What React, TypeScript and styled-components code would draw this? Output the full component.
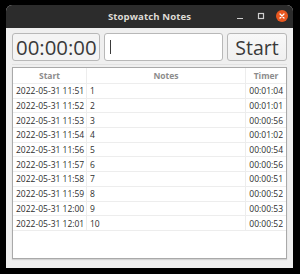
import React from "react";
import styled, { createGlobalStyle } from "styled-components";

const Global = createGlobalStyle`
  html, body { margin: 0; padding: 0; background: #000; }
  body { width: 300px; height: 274px; overflow: hidden; font-family: "Open Sans", "Noto Sans", sans-serif; }
`;

const Screen = styled.div`
  width: 300px;
  height: 274px;
  padding: 5px 7px 6px 6px;
  box-sizing: border-box;
  display: flex;
`;

const Window = styled.div`
  flex: 1;
  display: flex;
  flex-direction: column;
  border-radius: 6px 6px 0 0;
  overflow: hidden;
  background: #efefef;
`;

const TitleBar = styled.div`
  height: 23px;
  flex: none;
  background: #2c2c2c;
  display: flex;
  align-items: center;
  justify-content: center;
  position: relative;
  color: #dedbd5;
  font-weight: 700;
  font-size: 9.6px;
  letter-spacing: 0.1px;
`;

const Controls = styled.div`
  position: absolute;
  right: 5px;
  top: 5px;
  display: flex;
  align-items: center;
  gap: 9px;
`;

const CtlBox = styled.div`
  width: 12px;
  height: 12px;
  display: flex;
  align-items: center;
  justify-content: center;
`;

const CloseBtn = styled(CtlBox)`
  border-radius: 50%;
  background: #e8571f;
`;

const Content = styled.div`
  flex: 1;
  display: flex;
  flex-direction: column;
  padding: 5px 6px 9px 6px;
`;

const TopRow = styled.div`
  display: flex;
  gap: 4px;
  height: 28px;
`;

const Box = styled.div`
  box-sizing: border-box;
  border: 1px solid #b8b8b8;
  border-radius: 3px;
  display: flex;
  align-items: center;
`;

const TimerBox = styled(Box)`
  width: 88px;
  background: #f4f4f4;
  padding-left: 3px;
  font-size: 20.4px;
  color: #3a3a3a;
  letter-spacing: 0px;
`;

const InputBox = styled(Box)`
  flex: 1;
  background: #fff;
  padding-left: 5px;
`;

const Caret = styled.div`
  width: 1px;
  height: 14px;
  background: #3a3a3a;
`;

const StartButton = styled(Box)`
  width: 60px;
  justify-content: center;
  background: linear-gradient(#f8f8f8, #f0f0f0);
  font-size: 19.5px;
  color: #3a3a3a;
`;

const Divider = styled.div`
  height: 1px;
  background: #e2e2e2;
  margin: 3px 0 2px 0;
`;

const Table = styled.div`
  flex: 1;
  background: #fff;
  border: 1px solid #a9a9a9;
  box-shadow: 0 1px 1px rgba(0,0,0,0.12);
  display: flex;
  flex-direction: column;
  font-size: 8.5px;
  color: #2e2e2e;
`;

const Row = styled.div<{ $header?: boolean }>`
  display: grid;
  grid-template-columns: 74px 1fr 40px;
  height: ${(p) => (p.$header ? "16px" : "14.7px")};
  border-bottom: 1px solid #ededed;
  box-sizing: border-box;
  align-items: center;
  ${(p) => (p.$header ? "color: #8c8c8c; font-weight: 700;" : "")}
`;

const Cell = styled.div<{ $align?: "left" | "center" | "right"; $last?: boolean }>`
  height: 100%;
  display: flex;
  align-items: center;
  padding: 0 3px;
  white-space: nowrap;
  justify-content: ${(p) =>
    p.$align === "center" ? "center" : p.$align === "right" ? "flex-end" : "flex-start"};
  border-right: ${(p) => (p.$last ? "none" : "1px solid #ededed")};
`;

const rows = [
  ["2022-05-31 11:51", "1", "00:01:04"],
  ["2022-05-31 11:52", "2", "00:01:01"],
  ["2022-05-31 11:53", "3", "00:00:56"],
  ["2022-05-31 11:54", "4", "00:01:02"],
  ["2022-05-31 11:56", "5", "00:00:54"],
  ["2022-05-31 11:57", "6", "00:00:56"],
  ["2022-05-31 11:58", "7", "00:00:51"],
  ["2022-05-31 11:59", "8", "00:00:52"],
  ["2022-05-31 12:00", "9", "00:00:53"],
  ["2022-05-31 12:01", "10", "00:00:52"],
];

export default function App() {
  return (
    <>
      <Global />
      <Screen>
        <Window>
          <TitleBar>
            Stopwatch Notes
            <Controls>
              <CtlBox>
                <svg width="12" height="12" viewBox="0 0 12 12">
                  <line x1="3" y1="8.5" x2="9" y2="8.5" stroke="#cfcfcf" strokeWidth="1.2" />
                </svg>
              </CtlBox>
              <CtlBox>
                <svg width="12" height="12" viewBox="0 0 12 12">
                  <rect x="3.5" y="3.5" width="5" height="5" fill="none" stroke="#cfcfcf" strokeWidth="1.2" />
                </svg>
              </CtlBox>
              <CloseBtn>
                <svg width="12" height="12" viewBox="0 0 12 12">
                  <path d="M4 4 L8 8 M8 4 L4 8" stroke="#fff" strokeWidth="1.2" strokeLinecap="round" />
                </svg>
              </CloseBtn>
            </Controls>
          </TitleBar>
          <Content>
            <TopRow>
              <TimerBox>00:00:00</TimerBox>
              <InputBox>
                <Caret />
              </InputBox>
              <StartButton>Start</StartButton>
            </TopRow>
            <Divider />
            <Table>
              <Row $header>
                <Cell $align="center">Start</Cell>
                <Cell $align="center">Notes</Cell>
                <Cell $align="center" $last>Timer</Cell>
              </Row>
              {rows.map((r) => (
                <Row key={r[0]}>
                  <Cell>{r[0]}</Cell>
                  <Cell>{r[1]}</Cell>
                  <Cell $align="right" $last>{r[2]}</Cell>
                </Row>
              ))}
            </Table>
          </Content>
        </Window>
      </Screen>
    </>
  );
}
